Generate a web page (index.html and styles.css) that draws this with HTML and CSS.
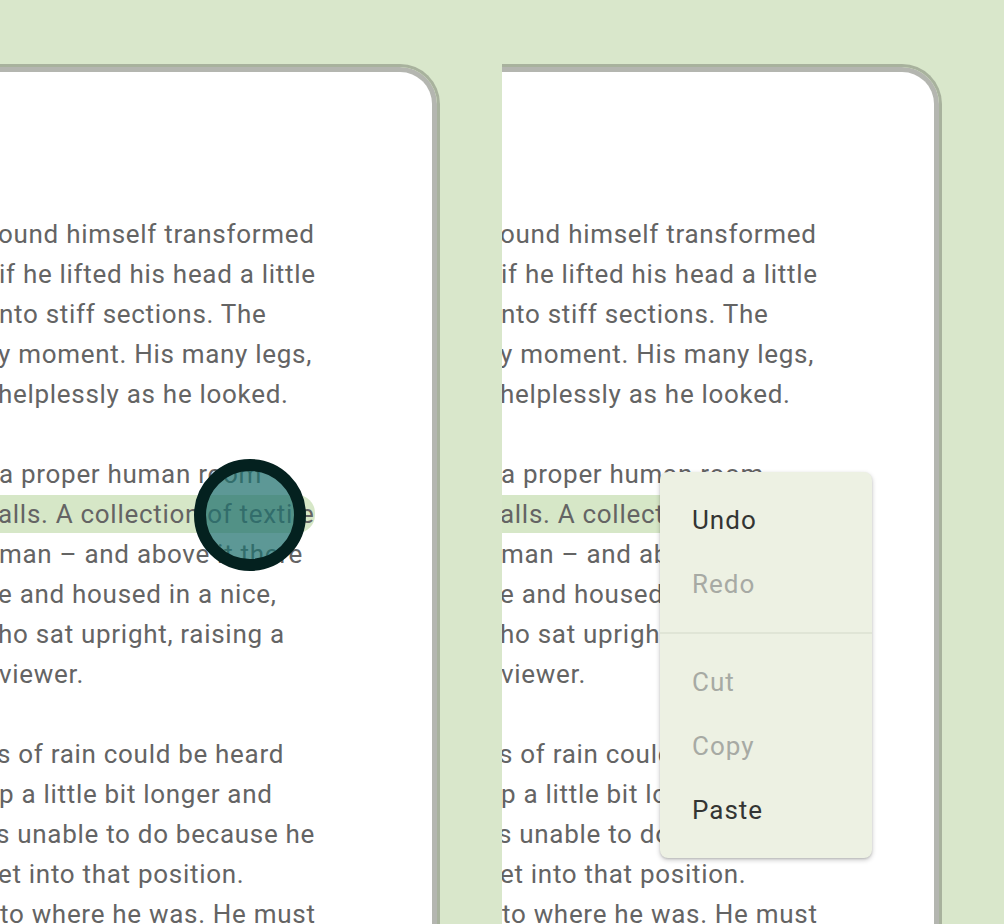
FILE: index.html
```html
<!DOCTYPE html>
<html>
<head>
<meta charset="utf-8">
<link rel="stylesheet" href="styles.css">
</head>
<body>
<div class="row">
  <div class="frame">
    <div class="frame-inner">
      <div class="screen">
        <div class="text">
          <div class="para">
            <div class="ln i2">ound himself transformed</div>
            <div class="ln i1">if he lifted his head a little</div>
            <div class="ln i1">nto stiff sections. The</div>
            <div class="ln i2">y moment. His many legs,</div>
            <div class="ln i2">helplessly as he looked.</div>
          </div>
          <div class="para">
            <div class="ln i1">a proper human room</div>
            <div class="ln i1"><span class="sel">alls. A collection of textile</span></div>
            <div class="ln i1">man – and above it there</div>
            <div class="ln i2">e and housed in a nice,</div>
            <div class="ln i2">ho sat upright, raising a</div>
            <div class="ln i1">viewer.</div>
          </div>
          <div class="para">
            <div class="ln i3">s of rain could be heard</div>
            <div class="ln i1">p a little bit longer and</div>
            <div class="ln i4">s unable to do because he</div>
            <div class="ln i2">et into that position.</div>
            <div class="ln i0">to where he was. He must</div>
          </div>
        </div>
        <div class="handle"></div>
      </div>
    </div>
  </div>
  <div class="frame">
    <div class="frame-inner">
      <div class="screen">
        <div class="text">
          <div class="para">
            <div class="ln i2">ound himself transformed</div>
            <div class="ln i1">if he lifted his head a little</div>
            <div class="ln i1">nto stiff sections. The</div>
            <div class="ln i2">y moment. His many legs,</div>
            <div class="ln i2">helplessly as he looked.</div>
          </div>
          <div class="para">
            <div class="ln i1">a proper human room</div>
            <div class="ln i1"><span class="sel">alls. A collection of textile</span></div>
            <div class="ln i1">man – and above it there</div>
            <div class="ln i2">e and housed in a nice,</div>
            <div class="ln i2">ho sat upright, raising a</div>
            <div class="ln i1">viewer.</div>
          </div>
          <div class="para">
            <div class="ln i3">s of rain could be heard</div>
            <div class="ln i1">p a little bit longer and</div>
            <div class="ln i4">s unable to do because he</div>
            <div class="ln i2">et into that position.</div>
            <div class="ln i0">to where he was. He must</div>
          </div>
        </div>
        <div class="menu">
          <div class="item">Undo</div>
          <div class="item disabled">Redo</div>
          <div class="divider"></div>
          <div class="item disabled">Cut</div>
          <div class="item disabled">Copy</div>
          <div class="item">Paste</div>
        </div>
      </div>
    </div>
  </div>
</div>
</body>
</html>
```
FILE: styles.css
```css
html, body {
  margin: 0;
  padding: 0;
}
body {
  background: #d9e7cb;
  width: 1004px;
  height: 924px;
  overflow: hidden;
  font-family: Roboto, "Noto Sans", sans-serif;
}
.row {
  display: flex;
  gap: 62px;
  padding-top: 64px;
}
.frame {
  width: 440px;
  height: 880px;
  flex: none;
  border-top: 3px solid #a8b29d;
  border-right: 3px solid #a8b29d;
  border-top-right-radius: 40px;
  box-sizing: border-box;
  overflow: hidden;
}
.frame-inner {
  height: 100%;
  border-top: 5px solid #b4b6b0;
  border-right: 5px solid #b4b6b0;
  border-top-right-radius: 37px;
  box-sizing: border-box;
  overflow: hidden;
  background: #ffffff;
}
.screen {
  position: relative;
  height: 100%;
}
.text {
  padding-top: 142px;
  color: #646464;
  font-size: 26px;
  letter-spacing: 0.7px;
  line-height: 40px;
  display: flex;
  flex-direction: column;
  gap: 40px;
}
.ln {
  white-space: nowrap;
}
.i0 { text-indent: 0; }
.i1 { text-indent: -1px; }
.i2 { text-indent: -2px; }
.i3 { text-indent: -3px; }
.i4 { text-indent: -4px; }
.sel {
  display: inline-block;
  line-height: 38px;
  background: #d6e7c7;
  padding-right: 0;
  border-radius: 0 18px 18px 0;
}
.handle {
  position: absolute;
  left: 194px;
  top: 387px;
  width: 112px;
  height: 112px;
  box-sizing: border-box;
  border: 12px solid #04211f;
  border-radius: 50%;
  background: rgba(30, 112, 110, 0.72);
}
.menu {
  position: absolute;
  left: 158px;
  top: 400px;
  width: 212px;
  padding: 16px 0;
  background: #edf1e3;
  border-radius: 8px;
  box-shadow: 0 2px 5px rgba(0, 0, 0, 0.22), 0 1px 2px rgba(0, 0, 0, 0.12);
  display: flex;
  flex-direction: column;
}
.item {
  height: 64px;
  line-height: 64px;
  padding-left: 32px;
  font-size: 26px;
  letter-spacing: 1px;
  color: #333533;
}
.item.disabled {
  color: #a7aaa4;
}
.divider {
  height: 2px;
  margin: 16px 0;
  background: #e0e5d6;
}
```
